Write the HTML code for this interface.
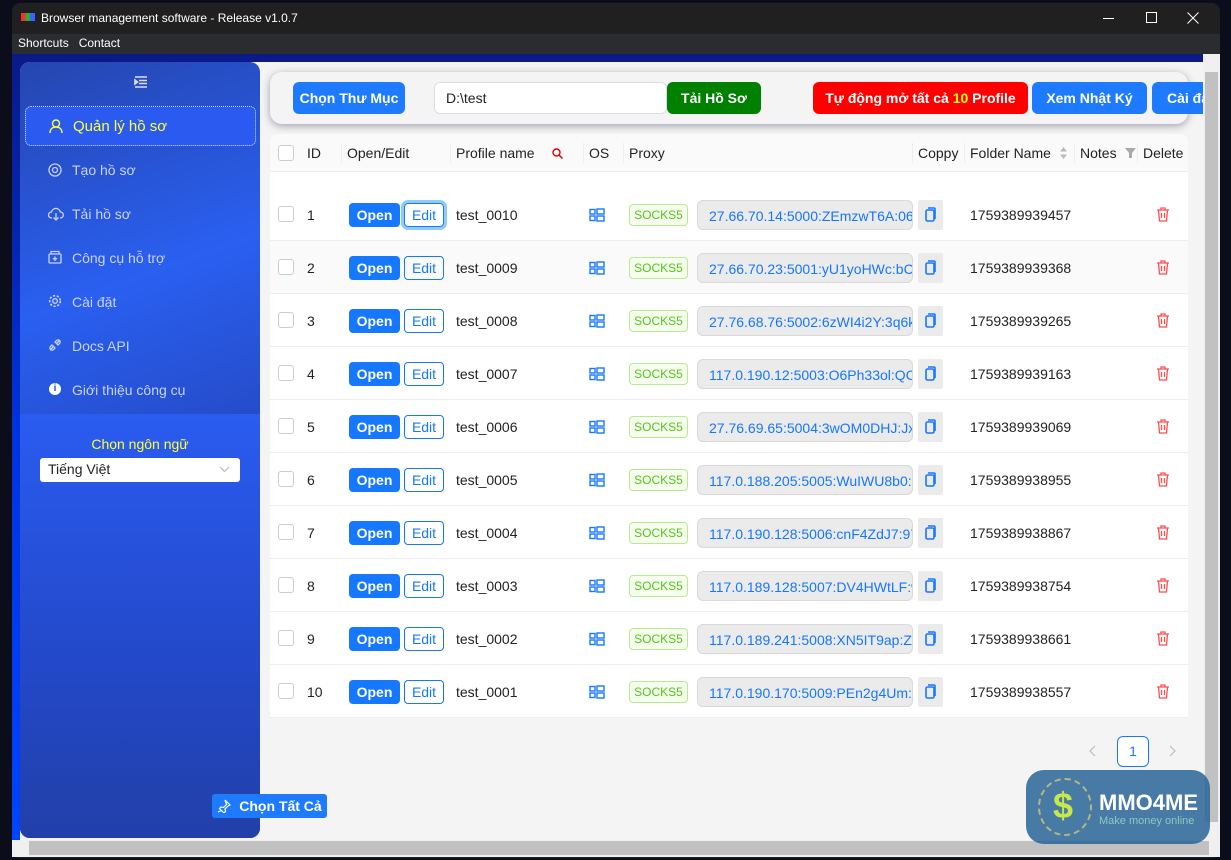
<!DOCTYPE html>
<html><head><meta charset="utf-8"><style>
*{box-sizing:border-box;margin:0;padding:0}
body{width:1231px;height:860px;overflow:hidden;background:#0b0d1a;font-family:"Liberation Sans","Noto Sans CJK SC",sans-serif;position:relative}
.a{position:absolute}
.win{left:12px;top:3px;width:1208px;height:855px;background:#202020;border-radius:8px;overflow:hidden}
.btn{position:absolute;color:#fff;font-weight:bold;font-size:14px;border-radius:6px;display:flex;align-items:center;justify-content:center}
.row{position:absolute;left:270px;width:918px;height:53px;border-bottom:1px solid #eee;background:#fff;font-size:14px;color:#222}
.row>*{position:absolute}
.cb{left:8px;top:18px;width:16px;height:16px;border:1px solid #ccc;border-radius:3px;background:#fff}
.id{left:37px;top:19px}
.op{left:79px;top:15px;width:51px;height:24px;background:#1677ff;color:#fff;font-weight:bold;border-radius:4px;text-align:center;line-height:24px;font-size:14px}
.ed{left:134px;top:15px;width:40px;height:24px;border:1px solid #1677ff;color:#1677ff;border-radius:4px;text-align:center;line-height:22px;font-size:14px}
.pn{left:186px;top:19px}
.os{left:319px;top:20px}
.sk{left:359px;top:16px;width:59px;height:22px;border:1px solid #b7eb8f;background:#f6ffed;color:#52c41a;font-size:12px;border-radius:4px;text-align:center;line-height:20px}
.px{left:427px;top:12px;width:216px;height:30px;background:#ebebeb;border:1px solid #d9d9d9;border-radius:6px;color:#1677ff;overflow:hidden;white-space:nowrap;padding-left:11px;line-height:30px;font-size:14px}
.cp{left:648px;top:12px;width:25px;height:30px;background:#ebebeb;border-radius:2px}
.fd{left:700px;top:19px}
.tr{left:886px;top:19px}
.mi{position:absolute;left:52px;color:#c8d2ff;font-size:14px}
.ic{position:absolute;left:28px}
</style></head><body>
<div class="a win">
 <div class="a" style="left:9px;top:10px;width:14px;height:8px;background:linear-gradient(90deg,#e33 0 33%,#3a3 33% 66%,#36f 66%)"></div>
 <div class="a" style="left:29px;top:8px;color:#fff;font-size:12px">Browser management software - Release v1.0.7</div>
 <div class="a" style="left:1091px;top:15px;width:11px;height:1px;background:#fff"></div>
 <div class="a" style="left:1134px;top:9px;width:11px;height:11px;border:1px solid #fff"></div>
 <svg class="a" style="left:1175px;top:9px" width="12" height="12"><path d="M0.5 0.5L11.5 11.5M11.5 0.5L0.5 11.5" stroke="#fff" stroke-width="1"/></svg>
 <div class="a" style="left:0;top:31px;width:1208px;height:20px;background:#2b2c30"></div>
 <div class="a" style="left:6px;top:33px;color:#fff;font-size:12px">Shortcuts&nbsp;&nbsp;&nbsp;Contact</div>
</div>
<div class="a" style="left:12px;top:54px;width:1191px;height:786px;background:linear-gradient(180deg,#0a1a88,#0033e0 50%,#0044ff)"></div>
<div class="a" style="left:20px;top:62px;width:1183px;height:778px;background:#f4f4f4;border-radius:10px 0 0 0"></div>
<!-- sidebar -->
<div class="a" style="left:20px;top:62px;width:240px;height:776px;border-radius:10px;background:linear-gradient(160deg,#2546b0,#2a5ff0 30%,#2244b8 60%,#2240a8);overflow:hidden">
 <div class="a" style="left:0;top:352px;width:240px;height:424px;background:linear-gradient(180deg,#2a5cf0,#2348c8 60%,#2240a8)"></div>
 <svg class="a" style="left:114px;top:14px" width="14" height="12"><path d="M1 1h12M5 4.5h8M5 7.5h8M1 11h12M1 4l2.5 2L1 8z" stroke="#dde" stroke-width="1.6" fill="#dde"/></svg>
 <div class="a" style="left:5px;top:44px;width:231px;height:40px;border:1px dotted #cfd8ff;border-radius:6px;background:#2a5af0"></div>
 <svg class="a" style="left:29px;top:57px" width="14" height="15"><circle cx="7" cy="4.5" r="3.5" fill="none" stroke="#ffff33" stroke-width="1.4"/><path d="M1 14c0-4 2.5-6 6-6s6 2 6 6" fill="none" stroke="#ffff33" stroke-width="1.4"/></svg>
 <div class="mi" style="left:53px;top:56px;color:#ffff33;font-size:15px">Quản lý hồ sơ</div>
 <svg class="ic" style="top:101px" width="14" height="14"><circle cx="7" cy="7" r="6" fill="none" stroke="#c8d2ff" stroke-width="1.3"/><circle cx="7" cy="7" r="2.5" fill="none" stroke="#c8d2ff" stroke-width="1.3"/></svg>
 <div class="mi" style="top:100px">Tạo hồ sơ</div>
 <svg class="ic" style="top:145px" width="16" height="14"><path d="M4 11H3.5a3 3 0 0 1 0-6 4.5 4.5 0 0 1 8.8 0 3 3 0 0 1 0 6H12M8 6v7M5.5 10.5L8 13l2.5-2.5" fill="none" stroke="#c8d2ff" stroke-width="1.3"/></svg>
 <div class="mi" style="top:144px">Tải hồ sơ</div>
 <svg class="ic" style="top:188px" width="14" height="14"><rect x="1" y="4" width="12" height="9" rx="1" fill="none" stroke="#c8d2ff" stroke-width="1.3"/><path d="M3 4V1.5h8V4M7 6.5v4.5M4.8 8.7h4.4" fill="none" stroke="#c8d2ff" stroke-width="1.3"/></svg>
 <div class="mi" style="top:188px">Công cụ hỗ trợ</div>
 <svg class="ic" style="top:232px" width="14" height="14"><circle cx="7" cy="7" r="2.3" fill="none" stroke="#c8d2ff" stroke-width="1.3"/><circle cx="7" cy="7" r="5.3" fill="none" stroke="#c8d2ff" stroke-width="1.6" stroke-dasharray="2.2 1.6"/></svg>
 <div class="mi" style="top:232px">Cài đặt</div>
 <svg class="ic" style="top:276px" width="14" height="14"><path d="M2 12l3-3M9 5l3-3M4 7l3 3-1.5 1.5a2 2 0 0 1-3-3zM10 7L7 4l1.5-1.5a2 2 0 0 1 3 3z" fill="none" stroke="#c8d2ff" stroke-width="1.3"/></svg>
 <div class="mi" style="top:276px">Docs API</div>
 <div class="ic" style="left:29px;top:321px;width:12px;height:12px;border-radius:50%;background:#fff;color:#2a50d0;font-size:10px;font-weight:bold;text-align:center;line-height:12px">i</div>
 <div class="mi" style="top:320px">Giới thiệu công cụ</div>
 <div class="a" style="left:0;top:374px;width:240px;text-align:center;color:#ffff33;font-size:14px">Chọn ngôn ngữ</div>
 <div class="a" style="left:20px;top:396px;width:200px;height:24px;background:#fff;border-radius:3px;font-size:14px;padding:3px 8px;color:#222">Tiếng Việt<svg style="position:absolute;right:10px;top:8px" width="11" height="7"><path d="M1 1l4.5 4.5L10 1" fill="none" stroke="#bbb" stroke-width="1.2"/></svg></div>
</div>
<div class="btn" style="left:212px;top:794px;width:115px;height:24px;border-radius:3px;font-size:14px;background:#1e7bff"><svg width="14" height="14" style="margin-right:8px"><path d="M8 1l5 5-2 1-3 3 .5 2.5L7 14 2.5 9.5 4 8l2.5.5 3-3z M4.5 11.5L1 13" fill="none" stroke="#fff" stroke-width="1.2"/></svg>Chọn Tất Cả</div>
<!-- toolbar -->
<div class="a" style="left:270px;top:72px;width:918px;height:52px;background:#f4f4f4;border-radius:12px;box-shadow:0 2px 8px rgba(60,60,90,.45)"></div>
<div class="btn" style="left:293px;top:82px;width:112px;height:32px;background:#1e7bff">Chọn Thư Mục</div>
<div class="a" style="left:434px;top:82px;width:233px;height:32px;background:#fff;border:1px solid #ddd;border-radius:6px;font-size:14px;padding:7px 11px;color:#222">D:\test</div>
<div class="btn" style="left:667px;top:82px;width:94px;height:32px;background:#008000">Tải Hồ Sơ</div>
<div class="btn" style="left:813px;top:82px;width:215px;height:32px;background:#ff0000">Tự động mở tất cả&nbsp;<span style="color:#ffff00">10</span>&nbsp;Profile</div>
<div class="btn" style="left:1032px;top:82px;width:115px;height:32px;background:#1e7bff">Xem Nhật Ký</div>
<div class="btn" style="left:1152px;top:82px;width:51px;height:32px;background:#1e7bff;border-radius:6px 0 0 6px;justify-content:flex-start;padding-left:15px;overflow:hidden;white-space:nowrap">Cài đặ</div>
<!-- table -->
<div class="a" style="left:270px;top:134px;width:918px;height:584px;background:#fff;border-radius:8px;overflow:hidden">
 <div class="a" style="left:0;top:0;width:918px;height:38px;background:#fafafa;border-bottom:1px solid #eee;font-size:14px;color:#222">
  <div class="a" style="left:8px;top:11px;width:16px;height:16px;border:1px solid #ccc;border-radius:3px;background:#fff"></div>
  <div class="a" style="left:37px;top:11px">ID</div>
  <div class="a" style="left:77px;top:11px">Open/Edit</div>
  <div class="a" style="left:186px;top:11px">Profile name</div>
  <svg class="a" style="left:282px;top:14px" width="11" height="11"><circle cx="4.5" cy="4.5" r="3.5" fill="none" stroke="#d00" stroke-width="1.4"/><path d="M7 7l3.5 3.5" stroke="#d00" stroke-width="1.5"/></svg>
  <div class="a" style="left:319px;top:11px">OS</div>
  <div class="a" style="left:359px;top:11px">Proxy</div>
  <div class="a" style="left:648px;top:11px">Coppy</div>
  <div class="a" style="left:700px;top:11px">Folder Name</div>
  <svg class="a" style="left:789px;top:12px" width="9" height="14"><path d="M4.5 1L8 5.5H1zM4.5 13L8 8.5H1z" fill="#bbb"/></svg>
  <div class="a" style="left:810px;top:11px">Notes</div>
  <svg class="a" style="left:855px;top:14px" width="11" height="10"><path d="M0 0h11L7 5v5H4V5z" fill="#aaa"/></svg>
  <div class="a" style="left:873px;top:11px">Delete</div>
  <div class="a" style="left:71px;top:9px;width:1px;height:20px;background:#eee"></div>
  <div class="a" style="left:180px;top:9px;width:1px;height:20px;background:#eee"></div>
  <div class="a" style="left:313px;top:9px;width:1px;height:20px;background:#eee"></div>
  <div class="a" style="left:353px;top:9px;width:1px;height:20px;background:#eee"></div>
  <div class="a" style="left:642px;top:9px;width:1px;height:20px;background:#eee"></div>
  <div class="a" style="left:694px;top:9px;width:1px;height:20px;background:#eee"></div>
  <div class="a" style="left:804px;top:9px;width:1px;height:20px;background:#eee"></div>
  <div class="a" style="left:867px;top:9px;width:1px;height:20px;background:#eee"></div>
 </div>
</div>
<div id="rows"></div>
<script>
var d=[["1","test_0010","27.66.70.14:5000:ZEmzwT6A:06la","1759389939457"],["2","test_0009","27.66.70.23:5001:yU1yoHWc:bCU","1759389939368"],["3","test_0008","27.76.68.76:5002:6zWI4i2Y:3q6kj","1759389939265"],["4","test_0007","117.0.190.12:5003:O6Ph33ol:QCE","1759389939163"],["5","test_0006","27.76.69.65:5004:3wOM0DHJ:Jxb","1759389939069"],["6","test_0005","117.0.188.205:5005:WuIWU8b0:S","1759389938955"],["7","test_0004","117.0.190.128:5006:cnF4ZdJ7:97","1759389938867"],["8","test_0003","117.0.189.128:5007:DV4HWtLF:w","1759389938754"],["9","test_0002","117.0.189.241:5008:XN5IT9ap:Ze","1759389938661"],["10","test_0001","117.0.190.170:5009:PEn2g4Um:s","1759389938557"]];
var win='<svg width="16" height="14" viewBox="0 0 16 14"><g fill="none" stroke="#1677ff" stroke-width="1.4"><rect x="1" y="1.5" width="5" height="4.5"/><rect x="1" y="8" width="5" height="4.5"/><rect x="8" y="1" width="7" height="5"/><rect x="8" y="8" width="7" height="5"/></g></svg>';
var cp='<svg width="25" height="30"><rect x="8" y="10" width="8" height="11" rx="1.5" fill="none" stroke="#1677ff" stroke-width="1.6"/><path d="M10 8h6a1 1 0 0 1 1 1v10" fill="none" stroke="#1677ff" stroke-width="1.6"/></svg>';
var tr='<svg width="14" height="15"><path d="M1 3h12M5 3V1h4v2M2.5 3l1 11h7l1-11M5.5 6v5M8.5 6v5" fill="none" stroke="#ff4d4f" stroke-width="1.3"/></svg>';
var h='';
d.forEach(function(r,i){var top=188+53*i;
h+='<div class="row" style="top:'+top+'px;'+(i==1?'background:#fafafa;':'')+'"><div class="cb"></div><div class="id">'+r[0]+'</div><div class="op">Open</div><div class="ed" '+(i==0?'style="box-shadow:0 0 0 3px #91caff"':'')+'>Edit</div><div class="pn">'+r[1]+'</div><div class="os">'+win+'</div><div class="sk">SOCKS5</div><div class="px">'+r[2]+'</div><div class="cp">'+cp+'</div><div class="fd">'+r[3]+'</div><div class="tr">'+tr+'</div></div>';});
document.getElementById('rows').innerHTML=h;
</script>
<!-- pagination -->
<svg class="a" style="left:1088px;top:745px" width="8" height="12"><path d="M7 1L2 6l5 5" fill="none" stroke="#bbb" stroke-width="1.2"/></svg>
<div class="a" style="left:1117px;top:736px;width:32px;height:31px;border:1px solid #1677ff;border-radius:6px;color:#1677ff;text-align:center;line-height:29px;font-size:14px;background:#fff">1</div>
<svg class="a" style="left:1169px;top:745px" width="8" height="12"><path d="M1 1l5 5-5 5" fill="none" stroke="#bbb" stroke-width="1.2"/></svg>
<!-- scrollbars -->
<div class="a" style="left:1203px;top:54px;width:17px;height:786px;background:#f0f0f0"></div>
<div class="a" style="left:1205px;top:72px;width:13px;height:750px;background:#c1c1c1"></div>
<div class="a" style="left:12px;top:840px;width:1208px;height:17px;background:#f0f0f0"></div>
<div class="a" style="left:29px;top:841px;width:1180px;height:14px;background:#c1c1c1"></div>
<!-- logo -->
<div class="a" style="left:1026px;top:770px;width:184px;height:74px;border-radius:18px;background:rgba(40,100,150,.85)">
 <div class="a" style="left:27px;top:16px;color:#c8e84a;font-size:36px;font-weight:bold;line-height:40px">$</div>
 <div class="a" style="left:12px;top:8px;width:54px;height:58px;border:2px dashed #ffe066;border-radius:50%;opacity:.6"></div>
 <div class="a" style="left:73px;top:20px;color:#fff;font-size:22px;font-weight:bold">MMO4ME</div>
 <div class="a" style="left:73px;top:45px;color:#8cc9c0;font-size:11px">Make money online</div>
</div>
</body></html>
